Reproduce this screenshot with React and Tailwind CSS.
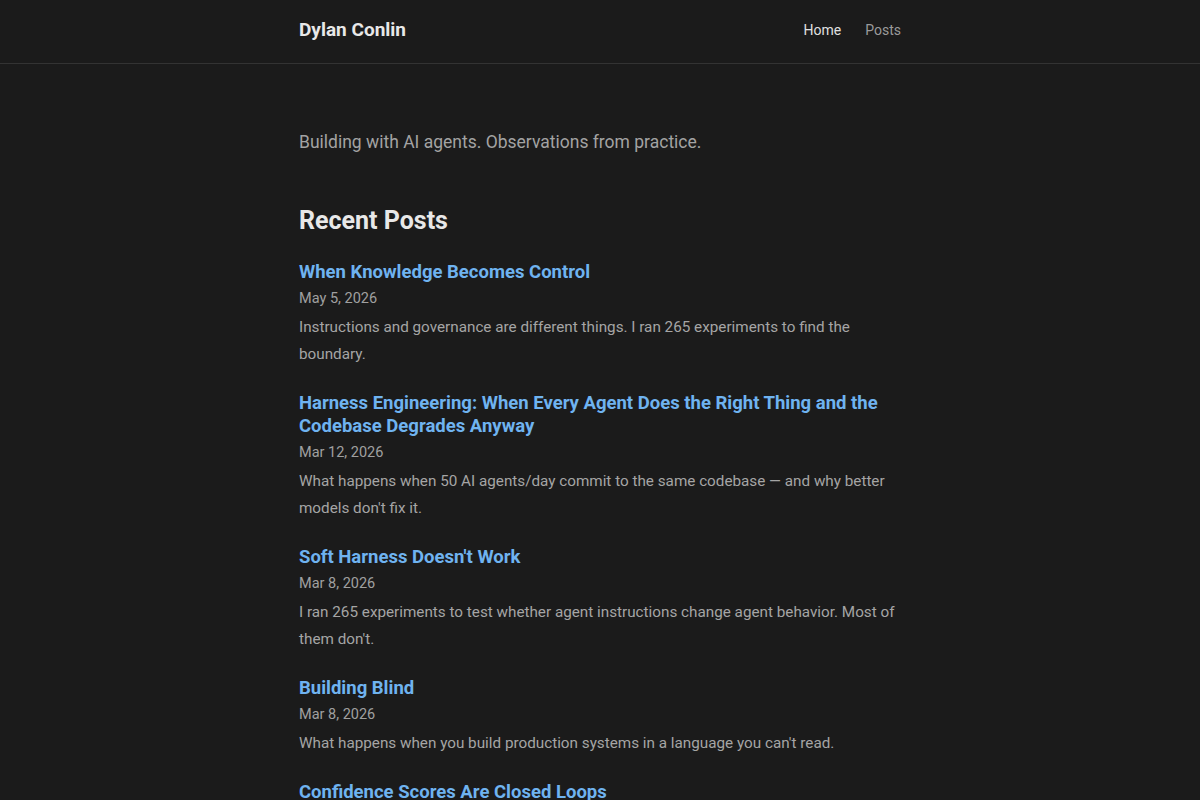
const posts = [
  {
    title: 'When Knowledge Becomes Control',
    date: 'May 5, 2026',
    desc: 'Instructions and governance are different things. I ran 265 experiments to find the boundary.',
  },
  {
    title: 'Harness Engineering: When Every Agent Does the Right Thing and the Codebase Degrades Anyway',
    date: 'Mar 12, 2026',
    desc: "What happens when 50 AI agents/day commit to the same codebase — and why better models don't fix it.",
  },
  {
    title: "Soft Harness Doesn't Work",
    date: 'Mar 8, 2026',
    desc: "I ran 265 experiments to test whether agent instructions change agent behavior. Most of them don't.",
  },
  {
    title: 'Building Blind',
    date: 'Mar 8, 2026',
    desc: "What happens when you build production systems in a language you can't read.",
  },
  {
    title: 'Confidence Scores Are Closed Loops',
    date: 'Mar 1, 2026',
    desc: 'Asking a model how sure it is tells you about the model, not the answer.',
  },
];

export default function App() {
  return (
    <div className="min-h-screen bg-[#1b1b1b] text-[#a9a9a9]" style={{ fontFamily: 'Roboto, "Noto Sans", sans-serif' }}>
      <header className="border-b border-[#333333]">
        <div className="mx-auto flex h-[63px] max-w-[602px] items-center justify-between pb-[3px]">
          <a className="text-[19px] font-bold text-[#e8e8e8]">Dylan Conlin</a>
          <nav className="flex gap-6 text-[14px]">
            <a className="text-[#e0e0e0]">Home</a>
            <a className="text-[#9a9a9a]">Posts</a>
          </nav>
        </div>
      </header>

      <main className="mx-auto max-w-[602px] pt-[65px]">
        <p className="text-[17.5px] leading-[26px] text-[#a3a3a3]">Building with AI agents. Observations from practice.</p>

        <h2 className="mt-[50px] text-[25px] font-bold leading-[32px] text-[#e8e8e8]">Recent Posts</h2>

        <div className="mt-[24px] flex flex-col gap-[24px]">
          {posts.map(p => (
            <article key={p.title}>
              <h3 className="text-[18.5px] font-bold leading-[23px] text-[#6fb3f0]">{p.title}</h3>
              <div className="mt-[5px] text-[14.5px] leading-[20px] text-[#a0a0a0]">{p.date}</div>
              <p className="mt-[5px] text-[15.25px] leading-[27px] text-[#a5a5a5]">{p.desc}</p>
            </article>
          ))}
        </div>
      </main>
    </div>
  );
}
